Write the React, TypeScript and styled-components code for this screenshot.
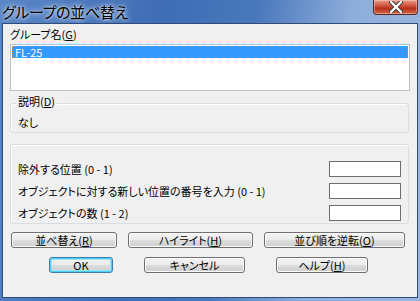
import styled, { createGlobalStyle, css } from "styled-components";

const GlobalStyle = createGlobalStyle`
  html, body {
    margin: 0;
    padding: 0;
    background: #ffffff;
  }
  body {
    font-family: "Noto Sans CJK JP", "DejaVu Sans", sans-serif;
    font-size: 11px;
    font-feature-settings: "palt";
  }
`;

const App: React.FC = () => {
  return (
    <>
      <GlobalStyle />
      <Window>
        <TitleBar>
          <Title>グループの並べ替え</Title>
          <CloseButton>
            <svg width="16" height="12" viewBox="0 0 16 12">
              <path
                d="M3 1 L13 11 M13 1 L3 11"
                stroke="#3a3a3a"
                strokeWidth="4.2"
                strokeLinecap="round"
              />
              <path
                d="M3 1 L13 11 M13 1 L3 11"
                stroke="#ffffff"
                strokeWidth="2.4"
                strokeLinecap="round"
              />
            </svg>
          </CloseButton>
        </TitleBar>
        <Client>
          <Label>
            グループ名(<u>G</u>)
          </Label>
          <ListBox>
            <ListItem $selected>FL-25</ListItem>
          </ListBox>

          <GroupBox $top={12}>
            <Legend>
              説明(<u>D</u>)
            </Legend>
            <GroupText>なし</GroupText>
          </GroupBox>

          <GroupBox $top={11}>
            <FieldList>
              <FieldRow>
                <span>除外する位置 (0 - 1)</span>
                <TextInput />
              </FieldRow>
              <FieldRow>
                <span>オブジェクトに対する新しい位置の番号を入力 (0 - 1)</span>
                <TextInput />
              </FieldRow>
              <FieldRow>
                <span>オブジェクトの数 (1 - 2)</span>
                <TextInput />
              </FieldRow>
            </FieldList>
          </GroupBox>

          <ButtonRow $top={8}>
            <Button $w={106}>
              並べ替え(<u>R</u>)
            </Button>
            <Button $w={125} $ml={11}>
              ハイライト(<u>H</u>)
            </Button>
            <Button $w={141} $ml={11}>
              並び順を逆転(<u>O</u>)
            </Button>
          </ButtonRow>
          <ButtonRow $top={9}>
            <Button $w={64} $ml={38} $default>
              OK
            </Button>
            <Button $w={101} $ml={31}>
              キャンセル
            </Button>
            <Button $w={92} $ml={31}>
              ヘルプ(<u>H</u>)
            </Button>
          </ButtonRow>
        </Client>
      </Window>
    </>
  );
};

const Window = styled.div`
  width: 420px;
  height: 301px;
  display: flex;
  flex-direction: column;
  background: linear-gradient(
    100deg,
    #5a86c6 0%,
    #3f6db5 35%,
    #4a78bc 55%,
    #8eaedb 75%,
    #9cb8de 100%
  );
  box-sizing: border-box;
  overflow: hidden;
`;

const TitleBar = styled.div`
  height: 23px;
  display: flex;
  align-items: flex-start;
  justify-content: space-between;
  flex-shrink: 0;
`;

const Title = styled.div`
  margin: 3px 0 0 2px;
  font-size: 15px;
  line-height: 18px;
  color: #000000;
  letter-spacing: -0.3px;
  text-shadow: 0 0 6px rgba(255, 255, 255, 0.9), 0 0 3px rgba(255, 255, 255, 0.8);
`;

const CloseButton = styled.div`
  width: 45px;
  height: 15px;
  margin-right: 2px;
  box-sizing: border-box;
  border: 1px solid #5a2a2a;
  border-top: none;
  border-radius: 0 0 4px 4px;
  background: linear-gradient(#e8a090 0%, #d0553f 40%, #b8301c 60%, #d06a4a 100%);
  display: flex;
  align-items: center;
  justify-content: center;
  box-shadow: inset 0 0 0 1px rgba(255, 200, 190, 0.5);
`;

const Client = styled.div`
  flex: 1;
  margin: 0 2px 3px 2px;
  border: 1px solid #2f4c78;
  background: #f0f0f0;
  padding: 2px 7px 0 7px;
  display: flex;
  flex-direction: column;
`;

const Label = styled.div`
  height: 16px;
  line-height: 16px;
  margin-bottom: 2px;
  color: #000;
`;

const ListBox = styled.div`
  height: 47px;
  box-sizing: border-box;
  border: 1px solid #b9c1cb;
  background: #ffffff;
  padding: 1px 1px 0 1px;
`;

const ListItem = styled.div<{ $selected?: boolean }>`
  height: 12px;
  line-height: 12px;
  padding-left: 3px;
  box-sizing: border-box;
  ${(p) =>
    p.$selected &&
    css`
      background: #3399ff;
      color: #ffffff;
      outline: 1px dotted #cc8a33;
      outline-offset: -1px;
    `}
`;

const GroupBox = styled.div<{ $top: number }>`
  position: relative;
  margin-top: ${(p) => p.$top}px;
  margin-right: 1px;
  border: 1px solid #d5dfe5;
  border-radius: 3px;
  box-shadow: inset 1px 1px 0 #ffffff;
`;

const Legend = styled.div`
  position: absolute;
  top: -11px;
  left: 5px;
  padding: 0 2px;
  background: #f0f0f0;
  line-height: 16px;
`;

const GroupText = styled.div`
  padding: 10px 7px 0 7px;
  height: 28px;
  line-height: 16px;
  box-sizing: border-box;
`;

const FieldList = styled.div`
  padding: 16px 7px 2px 7px;
  display: flex;
  flex-direction: column;
  gap: 6px;
`;

const FieldRow = styled.div`
  display: flex;
  align-items: center;
  justify-content: space-between;
  height: 16px;
  line-height: 16px;
`;

const TextInput = styled.div`
  width: 72px;
  height: 16px;
  box-sizing: border-box;
  border: 1px solid #6e6e6e;
  background: #ffffff;
`;

const ButtonRow = styled.div<{ $top: number }>`
  display: flex;
  margin-top: ${(p) => p.$top}px;
  padding-left: 1px;
`;

const Button = styled.div<{ $w: number; $ml?: number; $default?: boolean }>`
  width: ${(p) => p.$w}px;
  height: 16px;
  margin-left: ${(p) => p.$ml ?? 0}px;
  box-sizing: border-box;
  border: 1px solid #707070;
  border-radius: 3px;
  background: linear-gradient(#f3f3f3 0%, #ebebeb 50%, #dddddd 51%, #cfcfcf 100%);
  box-shadow: inset 0 0 0 1px #fcfcfc;
  display: flex;
  align-items: center;
  justify-content: center;
  line-height: 14px;
  color: #000;
  ${(p) =>
    p.$default &&
    css`
      border-color: #3c7fb1;
      box-shadow: inset 0 0 0 1px #48d0f8, inset 0 0 0 2px #9ee2f8;
    `}
`;

export default App;
